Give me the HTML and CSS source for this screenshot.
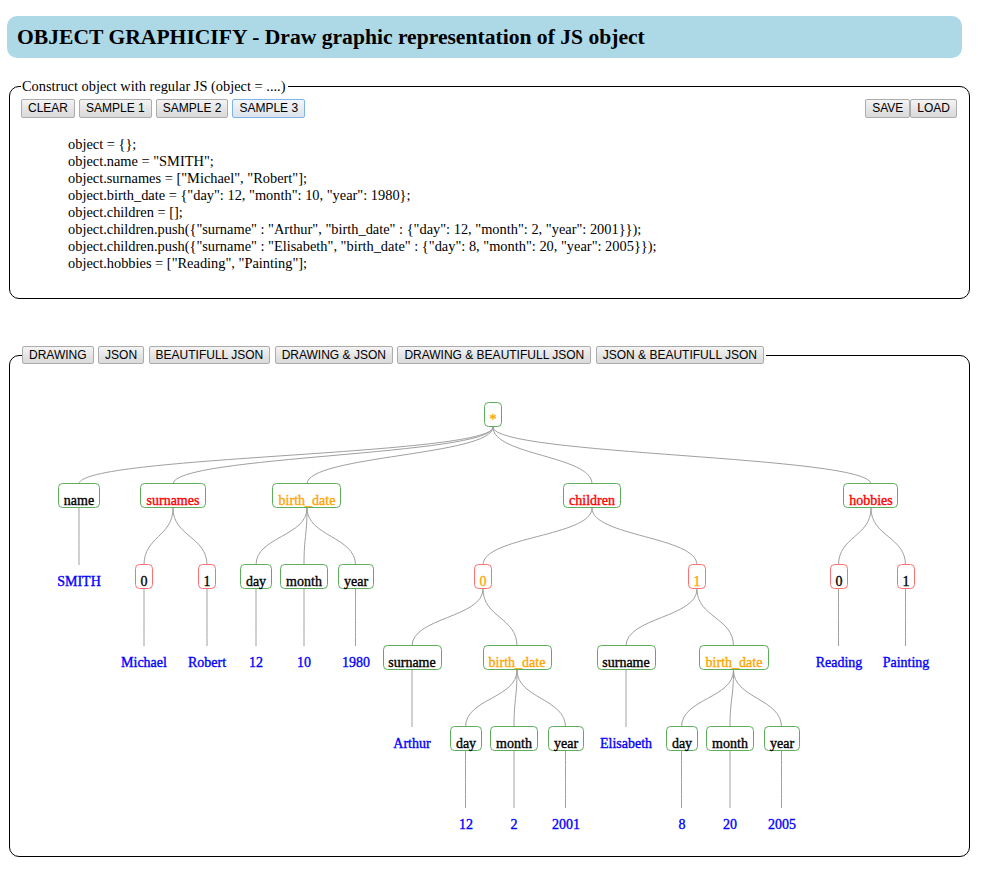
FILE: index.html
```html
<!DOCTYPE html>
<html lang="en">
<head>
<meta charset="utf-8">
<title>OBJECT GRAPHICIFY</title>
<link rel="stylesheet" href="styles.css">
</head>
<body>
<h1 class="title">OBJECT GRAPHICIFY - Draw graphic representation of JS object</h1>

<fieldset class="panel construct">
  <legend class="legend-text">Construct object with regular JS (object = ....)</legend>
  <div class="toolbar">
    <div class="group">
      <button class="btn">CLEAR</button>
      <button class="btn">SAMPLE 1</button>
      <button class="btn">SAMPLE 2</button>
      <button class="btn active">SAMPLE 3</button>
    </div>
    <div class="group tight">
      <button class="btn">SAVE</button>
      <button class="btn">LOAD</button>
    </div>
  </div>
  <div class="code">
    <div>object = {};</div>
    <div>object.name = "SMITH";</div>
    <div>object.surnames = ["Michael", "Robert"];</div>
    <div>object.birth_date = {"day": 12, "month": 10, "year": 1980};</div>
    <div>object.children = [];</div>
    <div>object.children.push({"surname" : "Arthur", "birth_date" : {"day": 12, "month": 2, "year": 2001}});</div>
    <div>object.children.push({"surname" : "Elisabeth", "birth_date" : {"day": 8, "month": 20, "year": 2005}});</div>
    <div>object.hobbies = ["Reading", "Painting"];</div>
  </div>
</fieldset>

<fieldset class="panel drawing">
  <legend class="legend-tabs">
    <div class="tabs">
      <button class="btn tab">DRAWING</button>
      <button class="btn tab">JSON</button>
      <button class="btn tab">BEAUTIFULL JSON</button>
      <button class="btn tab">DRAWING &amp; JSON</button>
      <button class="btn tab">DRAWING &amp; BEAUTIFULL JSON</button>
      <button class="btn tab">JSON &amp; BEAUTIFULL JSON</button>
    </div>
  </legend>
  <svg class="tree" width="959" height="492" viewBox="10 364 959 492" xmlns="http://www.w3.org/2000/svg">
    <g class="links">
      <path d="M493,427C493,455.5 79,455.5 79,484"/>
      <path d="M493,427C493,455.5 173,455.5 173,484"/>
      <path d="M493,427C493,455.5 307,455.5 307,484"/>
      <path d="M493,427C493,455.5 592,455.5 592,484"/>
      <path d="M493,427C493,455.5 871,455.5 871,484"/>

      <path d="M79,508C79,536.5 79,536.5 79,565"/>
      <path d="M173,508C173,536.5 144,536.5 144,565"/>
      <path d="M173,508C173,536.5 207,536.5 207,565"/>
      <path d="M307,508C307,536.5 256,536.5 256,565"/>
      <path d="M307,508C307,536.5 304,536.5 304,565"/>
      <path d="M307,508C307,536.5 355.5,536.5 355.5,565"/>
      <path d="M592,508C592,536.5 483,536.5 483,565"/>
      <path d="M592,508C592,536.5 697,536.5 697,565"/>
      <path d="M871,508C871,536.5 838.5,536.5 838.5,565"/>
      <path d="M871,508C871,536.5 905.5,536.5 905.5,565"/>

      <path d="M144,589C144,617.5 144,617.5 144,646"/>
      <path d="M207,589C207,617.5 207,617.5 207,646"/>
      <path d="M256,589C256,617.5 256,617.5 256,646"/>
      <path d="M304,589C304,617.5 304,617.5 304,646"/>
      <path d="M355.5,589C355.5,617.5 355.5,617.5 355.5,646"/>
      <path d="M483,589C483,617.5 412,617.5 412,646"/>
      <path d="M483,589C483,617.5 517,617.5 517,646"/>
      <path d="M697,589C697,617.5 626,617.5 626,646"/>
      <path d="M697,589C697,617.5 733.5,617.5 733.5,646"/>
      <path d="M838.5,589C838.5,617.5 838.5,617.5 838.5,646"/>
      <path d="M905.5,589C905.5,617.5 905.5,617.5 905.5,646"/>

      <path d="M412,670C412,698.5 412,698.5 412,727"/>
      <path d="M517,670C517,698.5 465.5,698.5 465.5,727"/>
      <path d="M517,670C517,698.5 514,698.5 514,727"/>
      <path d="M517,670C517,698.5 565.5,698.5 565.5,727"/>
      <path d="M626,670C626,698.5 626,698.5 626,727"/>
      <path d="M733.5,670C733.5,698.5 681.5,698.5 681.5,727"/>
      <path d="M733.5,670C733.5,698.5 730,698.5 730,727"/>
      <path d="M733.5,670C733.5,698.5 781.5,698.5 781.5,727"/>

      <path d="M465.5,751C465.5,779.5 465.5,779.5 465.5,808"/>
      <path d="M514,751C514,779.5 514,779.5 514,808"/>
      <path d="M565.5,751C565.5,779.5 565.5,779.5 565.5,808"/>
      <path d="M681.5,751C681.5,779.5 681.5,779.5 681.5,808"/>
      <path d="M730,751C730,779.5 730,779.5 730,808"/>
      <path d="M781.5,751C781.5,779.5 781.5,779.5 781.5,808"/>
    </g>

    <g class="boxes">
      <rect class="key" x="484.5" y="402.5" width="17" height="24" rx="4"/>

      <rect class="key" x="58.5" y="483.5" width="41" height="24" rx="4"/>
      <rect class="key" x="140.5" y="483.5" width="65" height="24" rx="4"/>
      <rect class="key" x="272.5" y="483.5" width="68" height="24" rx="4"/>
      <rect class="key" x="563.5" y="483.5" width="57" height="24" rx="4"/>
      <rect class="key" x="843.5" y="483.5" width="54" height="24" rx="4"/>

      <rect class="idx" x="135.5" y="564.5" width="17" height="24" rx="4"/>
      <rect class="idx" x="198.5" y="564.5" width="17" height="24" rx="4"/>
      <rect class="key" x="240.5" y="564.5" width="31" height="24" rx="4"/>
      <rect class="key" x="280.5" y="564.5" width="47" height="24" rx="4"/>
      <rect class="key" x="338.5" y="564.5" width="35" height="24" rx="4"/>
      <rect class="idx" x="474.5" y="564.5" width="17" height="24" rx="4"/>
      <rect class="idx" x="688.5" y="564.5" width="17" height="24" rx="4"/>
      <rect class="idx" x="830.5" y="564.5" width="17" height="24" rx="4"/>
      <rect class="idx" x="897.5" y="564.5" width="17" height="24" rx="4"/>

      <rect class="key" x="383.5" y="645.5" width="58" height="24" rx="4"/>
      <rect class="key" x="483.5" y="645.5" width="68" height="24" rx="4"/>
      <rect class="key" x="597.5" y="645.5" width="58" height="24" rx="4"/>
      <rect class="key" x="699.5" y="645.5" width="69" height="24" rx="4"/>

      <rect class="key" x="450.5" y="726.5" width="31" height="24" rx="4"/>
      <rect class="key" x="490.5" y="726.5" width="47" height="24" rx="4"/>
      <rect class="key" x="548.5" y="726.5" width="35" height="24" rx="4"/>
      <rect class="key" x="666.5" y="726.5" width="31" height="24" rx="4"/>
      <rect class="key" x="706.5" y="726.5" width="47" height="24" rx="4"/>
      <rect class="key" x="764.5" y="726.5" width="35" height="24" rx="4"/>
    </g>

    <g class="labels">
      <text class="obj" x="493" y="424">*</text>

      <text class="prim" x="79" y="505">name</text>
      <text class="arr" x="173" y="505">surnames</text>
      <text class="obj" x="307" y="505">birth_date</text>
      <text class="arr" x="592" y="505">children</text>
      <text class="arr" x="871" y="505">hobbies</text>

      <text class="val" x="79" y="586">SMITH</text>
      <text class="prim" x="144" y="586">0</text>
      <text class="prim" x="207" y="586">1</text>
      <text class="prim" x="256" y="586">day</text>
      <text class="prim" x="304" y="586">month</text>
      <text class="prim" x="356" y="586">year</text>
      <text class="obj" x="483" y="586">0</text>
      <text class="obj" x="697" y="586">1</text>
      <text class="prim" x="839" y="586">0</text>
      <text class="prim" x="906" y="586">1</text>

      <text class="val" x="144" y="667">Michael</text>
      <text class="val" x="207" y="667">Robert</text>
      <text class="val" x="256" y="667">12</text>
      <text class="val" x="304" y="667">10</text>
      <text class="val" x="356" y="667">1980</text>
      <text class="prim" x="412" y="667">surname</text>
      <text class="obj" x="517" y="667">birth_date</text>
      <text class="prim" x="626" y="667">surname</text>
      <text class="obj" x="734" y="667">birth_date</text>
      <text class="val" x="839" y="667">Reading</text>
      <text class="val" x="906" y="667">Painting</text>

      <text class="val" x="412" y="748">Arthur</text>
      <text class="prim" x="466" y="748">day</text>
      <text class="prim" x="514" y="748">month</text>
      <text class="prim" x="566" y="748">year</text>
      <text class="val" x="626" y="748">Elisabeth</text>
      <text class="prim" x="682" y="748">day</text>
      <text class="prim" x="730" y="748">month</text>
      <text class="prim" x="782" y="748">year</text>

      <text class="val" x="466" y="829">12</text>
      <text class="val" x="514" y="829">2</text>
      <text class="val" x="566" y="829">2001</text>
      <text class="val" x="682" y="829">8</text>
      <text class="val" x="730" y="829">20</text>
      <text class="val" x="782" y="829">2005</text>
    </g>
  </svg>
</fieldset>
</body>
</html>
```

FILE: styles.css
```css
html, body {
  margin: 0;
  padding: 0;
  background: #fff;
}

body {
  font-family: "Liberation Serif", "Times New Roman", serif;
  color: #000;
  width: 984px;
}

.title {
  box-sizing: border-box;
  margin: 16px 0 0 7px;
  width: 955px;
  height: 42px;
  padding-left: 10px;
  background: #add8e6;
  border-radius: 10px;
  font-size: 21.6px;
  line-height: 42px;
  font-weight: bold;
}

.panel {
  box-sizing: border-box;
  margin: 0 0 0 9px;
  width: 961px;
  min-width: 0;
  border: 1px solid #000;
  border-radius: 10px;
}

.construct {
  margin-top: 19px;
  padding: 4px 12px 26px 11px;
}

.legend-text {
  padding: 0 2px 0 1px;
  font-size: 14.4px;
  line-height: 18px;
}

.toolbar {
  display: flex;
  justify-content: space-between;
  align-items: flex-start;
}

.group {
  display: flex;
  gap: 4px;
}

.group.tight {
  gap: 0;
}

.btn {
  box-sizing: border-box;
  height: 19px;
  margin: 0;
  padding: 0 6px;
  font-family: "Liberation Sans", Arial, sans-serif;
  font-size: 12px;
  line-height: 17px;
  color: #000;
  border: 1px solid #acacac;
  border-radius: 2px;
  background: linear-gradient(#f4f4f4, #e4e4e4 55%, #dadada);
}

.btn.active {
  border-color: #7eb4ea;
  background: linear-gradient(#f3f7fb, #e5ebf1 55%, #dce3ea);
}

.code {
  margin-top: 18px;
  padding-left: 47px;
  font-size: 14.4px;
  line-height: 17px;
}

.drawing {
  margin-top: 47px;
  padding: 0;
}

.legend-tabs {
  margin-left: 12px;
  padding: 0 2px 0 0;
}

.tabs {
  display: flex;
  gap: 4.5px;
}

.btn.tab {
  height: 18px;
  line-height: 16px;
  padding: 0 6px;
}

.tree {
  display: block;
}

.links path {
  fill: none;
  stroke: #a0a0a0;
  stroke-width: 1;
}

.boxes rect {
  fill: #fff;
  stroke-width: 1;
}

.boxes .key {
  stroke: #5cad5c;
}

.boxes .idx {
  stroke: #ff7070;
}

.labels text {
  font-family: "Liberation Serif", "Times New Roman", serif;
  font-size: 14px;
  text-anchor: middle;
  stroke-width: 0.35px;
  paint-order: stroke;
}

.labels .prim {
  fill: #000;
  stroke: #000;
}

.labels .arr {
  fill: #f00;
  stroke: #f00;
}

.labels .obj {
  fill: #ffa500;
  stroke: #ffa500;
}

.labels .val {
  fill: #0000ff;
  stroke: #0000ff;
}
```
